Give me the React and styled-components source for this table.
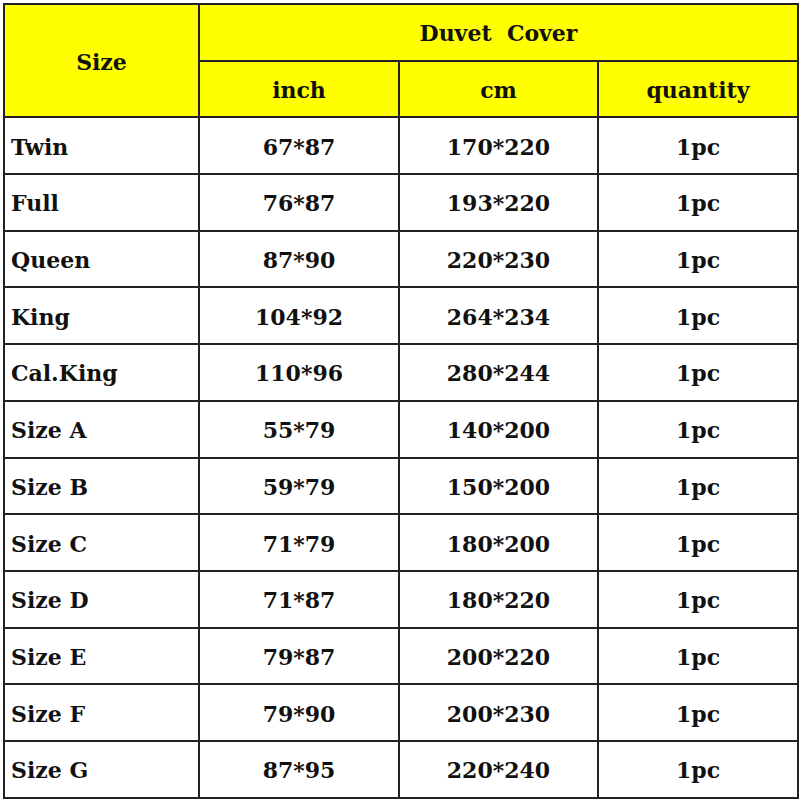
import { createGlobalStyle, styled } from "styled-components";

const GlobalStyle = createGlobalStyle`
  html, body {
    margin: 0;
    padding: 0;
    background: #ffffff;
  }
`;

const Page = styled.div`
  width: 800px;
  height: 800px;
  padding: 3px 0 0 3px;
  box-sizing: border-box;
  background: #ffffff;
  overflow: hidden;
`;

const Table = styled.table`
  border-collapse: collapse;
  table-layout: fixed;
  width: 794px;
  font-family: "DejaVu Serif", "Liberation Serif", serif;
  font-weight: bold;
  font-size: 22px;
  color: #111;
`;

const Cell = styled.td`
  border: 2px solid #222;
  height: 52.7px;
  padding: 2px 0 0 0;
  text-align: ${(p) => (p.$left ? "left" : "center")};
  padding-left: ${(p) => (p.$left ? "6px" : "0")};
  background: ${(p) => (p.$head ? "#ffff00" : "#ffffff")};
  white-space: pre;
  vertical-align: middle;
`;

const rows = [
  ["Twin", "67*87", "170*220"],
  ["Full", "76*87", "193*220"],
  ["Queen", "87*90", "220*230"],
  ["King", "104*92", "264*234"],
  ["Cal.King", "110*96", "280*244"],
  ["Size A", "55*79", "140*200"],
  ["Size B", "59*79", "150*200"],
  ["Size C", "71*79", "180*200"],
  ["Size D", "71*87", "180*220"],
  ["Size E", "79*87", "200*220"],
  ["Size F", "79*90", "200*230"],
  ["Size G", "87*95", "220*240"],
];

export default function App() {
  return (
    <Page>
      <GlobalStyle />
      <Table>
        <colgroup>
          <col style={{ width: 195 }} />
          <col style={{ width: 200 }} />
          <col style={{ width: 199 }} />
          <col style={{ width: 200 }} />
        </colgroup>
        <tbody>
          <tr>
            <Cell $head rowSpan={2}>Size</Cell>
            <Cell $head colSpan={3}>{"Duvet  Cover"}</Cell>
          </tr>
          <tr>
            <Cell $head>inch</Cell>
            <Cell $head>cm</Cell>
            <Cell $head>quantity</Cell>
          </tr>
          {rows.map((r) => (
            <tr key={r[0]}>
              <Cell $left>{r[0]}</Cell>
              <Cell>{r[1]}</Cell>
              <Cell>{r[2]}</Cell>
              <Cell>1pc</Cell>
            </tr>
          ))}
        </tbody>
      </Table>
    </Page>
  );
}
